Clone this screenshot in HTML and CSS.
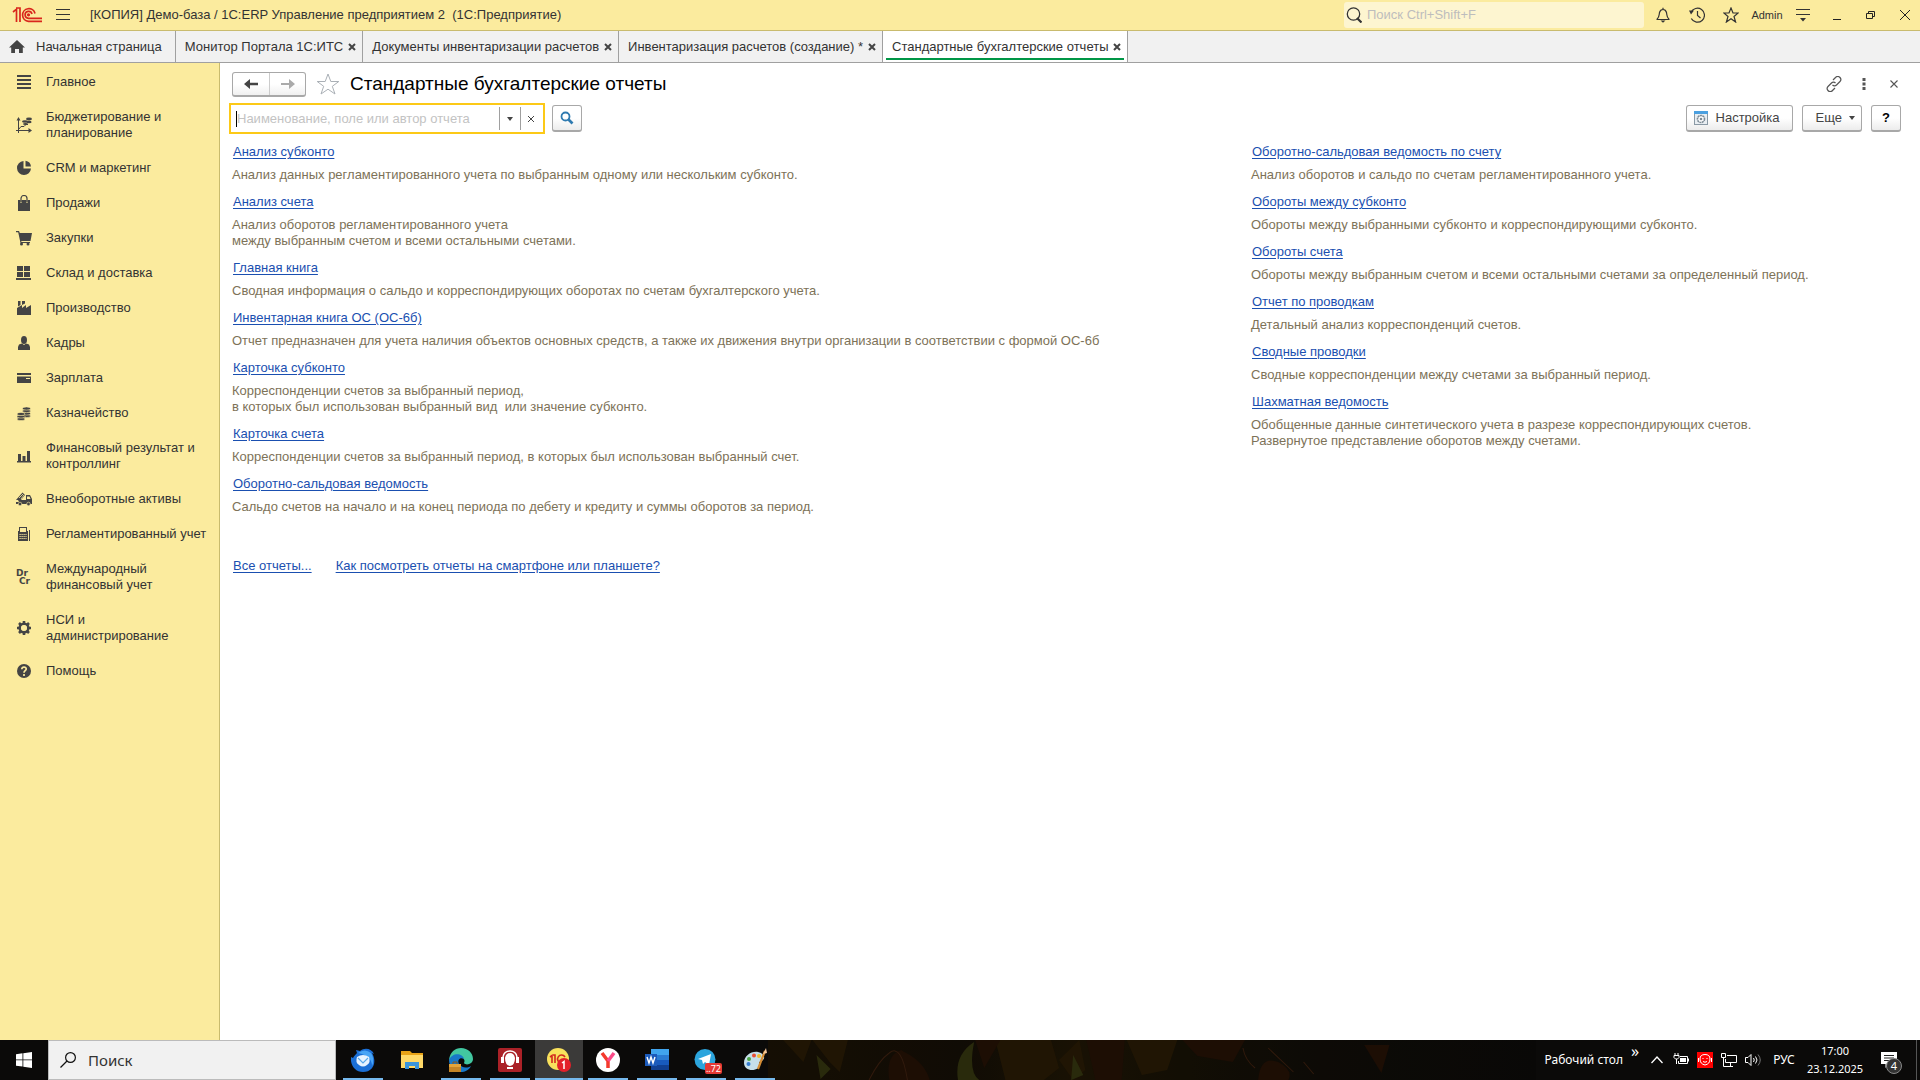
FILE: index.html
```
<!DOCTYPE html>
<html lang="ru">
<head>
<meta charset="utf-8">
<title>Стандартные бухгалтерские отчеты</title>
<link rel="stylesheet" href="styles.css">
</head>
<body>
<header class="titlebar">
  <svg class="logo" viewBox="0 0 30 16" width="30" height="16" fill="none" stroke="#d9261c" stroke-width="1.700"><path d="M1 5 4.500 2.200V15M8 15V1H4"/><path d="M23 6.500A6.300 6.300 0 1 0 16.500 14.300H30"/><path d="M20 7A3.500 3.500 0 1 0 16.500 11.300H30"/><circle cx="16.500" cy="7.800" r=".8"/></svg>
  <button class="icon-btn burger" aria-label="Меню"><svg viewBox="0 0 14 12" width="14" height="12" stroke="#333" fill="none"><path d="M0 .5h14M0 5.500h14M0 10.500h14"/></svg></button>
  <span class="app-title">[КОПИЯ] Демо-база / 1С:ERP Управление предприятием 2&nbsp; (1С:Предприятие)</span>
  <label class="global-search">
    <svg viewBox="0 0 16 16" width="16" height="16" fill="none" stroke="#333" stroke-width="1.300"><circle cx="7.500" cy="7" r="6.200"/><path d="m11 11 4.500 4.500" stroke-width="2.200"/></svg>
    <input type="text" placeholder="Поиск Ctrl+Shift+F" aria-label="Поиск">
  </label>
  <nav class="title-actions">
    <button class="icon-btn" aria-label="Уведомления"><svg viewBox="0 0 16 16" width="16" height="16" fill="none" stroke="#333" stroke-width="1.200"><path d="M1.500 12.500h13M2 12.300C4.500 10 4 8 4.500 5.500 5 3.500 6.500 2.500 8 2.500s3 1 3.500 3c.500 2.500 0 4.500 2.500 6.800M8 .8v2"/><path d="M5.500 13.500h5L8 15.800Z" fill="#333" stroke="none"/></svg></button>
    <button class="icon-btn" aria-label="История"><svg viewBox="0 0 16 16" width="16" height="16" fill="none" stroke="#333" stroke-width="1.200"><path d="M2 5.500A7 7 0 1 1 2.300 11.500M8.500 4v4.500l3 2.500"/><path d="M0 3.500h5L2 7.500Z" fill="#333" stroke="none"/></svg></button>
    <button class="icon-btn" aria-label="Избранное"><svg viewBox="0 0 16 16" width="16" height="16" fill="none" stroke="#333" stroke-width="1.200"><path d="m8 1 2 5h5.200L11 9.500l1.600 5.500L8 11.800 3.400 15 5 9.500.8 6H6Z"/></svg></button>
    <button class="user">Admin</button>
    <button class="icon-btn" aria-label="Сервис"><svg viewBox="0 0 16 14" width="16" height="14" fill="none" stroke="#333" stroke-width="1.200"><path d="M1 1.500h14M1 6.500h14"/><path d="M5 10h6l-3 3.500Z" fill="#333" stroke="none"/></svg></button>
    <button class="icon-btn" aria-label="Свернуть"><svg viewBox="0 0 10 12" width="10" height="12" stroke="#222"><path d="M1 10.500h8"/></svg></button>
    <button class="icon-btn" aria-label="Восстановить"><svg viewBox="0 0 10 10" width="10" height="10" fill="none" stroke="#222"><path d="M.5 3.500h6v5h-6ZM2.500 3V1.500h6v5H7"/></svg></button>
    <button class="icon-btn" aria-label="Закрыть"><svg viewBox="0 0 10 10" width="10" height="10" stroke="#222"><path d="m0 0 10 10M10 0 0 10"/></svg></button>
  </nav>
</header>

<nav class="tabs">
  <div class="tab tab-home"><button class="tab-label"><svg viewBox="0 0 16 14" width="16" height="14" fill="#444"><path d="M8 0 0 7.500h2.200V13H6V9h4v4h3.800V7.500H16Z"/></svg>Начальная страница</button></div>
  <div class="tab"><button class="tab-label">Монитор Портала 1С:ИТС</button><button class="tab-close" aria-label="Закрыть вкладку"><svg viewBox="0 0 8 8" width="8" height="8"><path d="m1 1 6 6M7 1 1 7"/></svg></button></div>
  <div class="tab"><button class="tab-label">Документы инвентаризации расчетов</button><button class="tab-close" aria-label="Закрыть вкладку"><svg viewBox="0 0 8 8" width="8" height="8"><path d="m1 1 6 6M7 1 1 7"/></svg></button></div>
  <div class="tab"><button class="tab-label">Инвентаризация расчетов (создание) *</button><button class="tab-close" aria-label="Закрыть вкладку"><svg viewBox="0 0 8 8" width="8" height="8"><path d="m1 1 6 6M7 1 1 7"/></svg></button></div>
  <div class="tab tab-active"><button class="tab-label">Стандартные бухгалтерские отчеты</button><button class="tab-close" aria-label="Закрыть вкладку"><svg viewBox="0 0 8 8" width="8" height="8"><path d="m1 1 6 6M7 1 1 7"/></svg></button></div>
</nav>

<div class="workspace">
  <nav class="sidebar">
    <a href="#"><svg viewBox="0 0 16 16"><path d="M1 1h14v2H1ZM1 5h14v2H1ZM1 9h14v2H1ZM1 13h14v2H1Z"/></svg>Главное</a>
    <a href="#"><svg viewBox="0 0 16 16"><path d="M2 3h1v10h10v1H3v2H2v-2H0v-1h2ZM.5 3.500 2.500 0l2 3.500ZM12.500 11l3.500 2.500-3.500 2.500Z"/><path d="m3 12 2-2.500h3l2-2h2" fill="none" stroke="#444"/><ellipse cx="13" cy="2" rx="3" ry="1.400"/><ellipse cx="9" cy="4.500" rx="3" ry="1.300"/><ellipse cx="13" cy="5" rx="2.600" ry="1.200"/><ellipse cx="9.500" cy="7" rx="2.500" ry="1"/></svg>Бюджетирование и планирование</a>
    <a href="#"><svg viewBox="0 0 16 16"><path d="M7.500 1v7.500H15A7 7 0 1 1 7.500 1ZM9.500 0.800a6.500 6.500 0 0 1 5.500 5.700H9.500Z"/></svg>CRM и маркетинг</a>
    <a href="#"><svg viewBox="0 0 16 16"><path d="M2 5h2.500v3h1V5h5v3h1V5H14v11H2Z"/><path d="M5 7V3.500a3 3 0 0 1 6 0V7" fill="none" stroke="#444" stroke-width="1.200"/></svg>Продажи</a>
    <a href="#"><svg viewBox="0 0 16 16"><path d="M0 1h3l.8 2H16l-1.500 8H5.200l.3 1H14v1H4.500L2.200 2.200H0Z"/><circle cx="5.500" cy="14" r="1.500"/><circle cx="12" cy="14" r="1.500"/></svg>Закупки</a>
    <a href="#"><svg viewBox="0 0 16 16"><path d="M1 1h6v5H1ZM8 1h6v5H8ZM1 7h6v5H1ZM8 7h6v5H8ZM0 13h15v2H0Z"/></svg>Склад и доставка</a>
    <a href="#"><svg viewBox="0 0 16 16"><path d="M1 15V8l5-3v3l4-3v3l5-3v10ZM2 1h2.500v4L2 6.500ZM6 1h3v2.500L6 5Z"/></svg>Производство</a>
    <a href="#"><svg viewBox="0 0 16 16"><ellipse cx="8" cy="5" rx="3" ry="4"/><path d="M2 15v-3l1-2.500 3-1 2 1.500 2-1.500 3 1 1 2.500v3Z"/></svg>Кадры</a>
    <a href="#"><svg viewBox="0 0 16 16"><path d="M1 3h14v2H1ZM1 6.500h14V13H1Z"/><path d="M10 8h4v1h-4Z" fill="#fbeb9e"/></svg>Зарплата</a>
    <a href="#"><svg viewBox="0 0 16 16"><g stroke="#fbeb9e" stroke-width=".6"><ellipse cx="10.500" cy="11" rx="4" ry="1.600"/><ellipse cx="10.500" cy="8.500" rx="4" ry="1.600"/><ellipse cx="10.500" cy="6" rx="4" ry="1.600"/><ellipse cx="10.500" cy="3.500" rx="4" ry="1.600"/><ellipse cx="5" cy="14" rx="4" ry="1.600"/><ellipse cx="5" cy="11.500" rx="4" ry="1.600"/><ellipse cx="5" cy="9" rx="4" ry="1.600"/></g></svg>Казначейство</a>
    <a href="#"><svg viewBox="0 0 16 16"><path d="M1 13h14v1.500H1ZM2 6h3v7H2ZM6.500 8h3v5h-3ZM11 3h3v10h-3Z"/></svg>Финансовый результат и контроллинг</a>
    <a href="#"><svg viewBox="0 0 16 16"><path d="M0 9 6.500 1.500 9 4 5 9h5V4h4l2 4v5H0v-2h3L2 9ZM11 5.500V8h3.500l-1-2.500Z" fill-rule="evenodd"/><circle cx="4" cy="13" r="1.800" stroke="#fbeb9e" stroke-width=".6"/><circle cx="12.500" cy="13" r="1.800" stroke="#fbeb9e" stroke-width=".6"/><path d="m3 7 4-4M5 8l3-4" stroke="#fbeb9e" stroke-width=".8"/></svg>Внеоборотные активы</a>
    <a href="#"><svg viewBox="0 0 16 16"><path d="M3 1h8v4h1v10H2V5h1Zm1 1v4h6V2ZM13 4h1v11h-1Z" fill-rule="evenodd"/><path d="M3.500 8.500h7M3.500 10.500h7M3.500 12.500h7" stroke="#fbeb9e" stroke-dasharray="1.200 .8"/></svg>Регламентированный учет</a>
    <a href="#"><svg viewBox="0 0 16 16"><text x="0" y="7" class="drcr">Dr</text><text x="3" y="15" class="drcr">Cr</text></svg>Международный финансовый учет</a>
    <a href="#"><svg viewBox="0 0 16 16"><circle cx="8" cy="8" r="4.300" fill="none" stroke="#444" stroke-width="2.600"/><path d="M8 1v3M8 12v3M1 8h3M12 8h3M3 3l2 2M11 11l2 2M13 3l-2 2M5 11l-2 2" stroke="#444" stroke-width="2.600"/><circle cx="8" cy="8" r="2.800" fill="#fbeb9e"/></svg>НСИ и администрирование</a>
    <a href="#"><svg viewBox="0 0 16 16"><circle cx="8" cy="8" r="7"/><path d="M5.800 6.200c.2-3 4.600-2.600 4.400 0C10 7.700 8 7.800 8 9.800M8 11v2" fill="none" stroke="#fbeb9e" stroke-width="1.700"/></svg>Помощь</a>
  </nav>

  <main class="content">
    <div class="form-head">
      <div class="history">
        <button aria-label="Назад"><svg viewBox="0 0 14 10" width="14" height="10" fill="#444"><path d="M0 5 6 0v3.800h8v2.400H6V10Z"/></svg></button>
        <button aria-label="Вперед"><svg viewBox="0 0 14 10" width="14" height="10" fill="#aaa"><path d="M14 5 8 0v4H0v2h8v4Z"/></svg></button>
      </div>
      <button class="icon-btn star" aria-label="В избранное"><svg viewBox="0 0 24 22" width="24" height="22" fill="#fff" stroke="#aab0b6"><path d="m12 1 2.800 7.500h8l-6.500 4.800 2.700 7.700-7-4.800-7 4.800 2.700-7.700L1.200 8.500h8Z"/></svg></button>
      <h1>Стандартные бухгалтерские отчеты</h1>
      <div class="form-tools">
        <button class="icon-btn" aria-label="Получить ссылку"><svg viewBox="0 0 16 16" width="16" height="16" fill="none" stroke="#555" stroke-width="1.200"><path d="m7 4 2.500-2.500a2.900 2.900 0 0 1 4.500 0c1 1.200 1 3 0 4L10.500 9a2.800 2.800 0 0 1-4 0M9 12l-2.500 2.500a2.900 2.900 0 0 1-4.500 0c-1-1.200-1-3 0-4L5.500 7a2.800 2.800 0 0 1 4 0"/></svg></button>
        <button class="icon-btn" aria-label="Еще действия"><svg viewBox="0 0 4 12" width="4" height="12" fill="#555"><path d="M.5 0h3v3h-3ZM.5 4.500h3v3h-3ZM.5 9h3v3h-3Z"/></svg></button>
        <button class="icon-btn" aria-label="Закрыть"><svg viewBox="0 0 8 8" width="8" height="8" stroke="#555" stroke-width="1.100"><path d="m.5.5 7 7m0-7-7 7"/></svg></button>
      </div>
    </div>

    <div class="command-bar">
      <div class="combo">
        <input type="text" placeholder="Наименование, поле или автор отчета" aria-label="Поиск отчета">
        <button aria-label="Выбрать"><svg viewBox="0 0 6 4" width="6" height="4" fill="#444"><path d="M0 0h6L3 4Z"/></svg></button>
        <button aria-label="Очистить"><svg viewBox="0 0 6 6" width="6" height="6" stroke="#444"><path d="m0 0 6 6M6 0 0 6"/></svg></button>
      </div>
      <button class="btn btn-square" aria-label="Найти"><svg viewBox="0 0 14 14" width="14" height="14" fill="none" stroke="#2e7ab0" stroke-width="1.800"><circle cx="5.500" cy="5.500" r="4"/><path d="m8.500 8.500 4 4" stroke-width="2.600"/></svg></button>
      <div class="commands">
        <button class="btn"><svg viewBox="0 0 14 14" width="14" height="14"><path d="M0 0h14v14H0Z" fill="#8a99a5"/><path d="M1 3h12v10H1Z" fill="#e9eef2"/><path d="M0 0h14v3H0Z" fill="#4ba0e0"/><circle cx="7" cy="8" r="3.500" fill="#fff" stroke="#7d8b96" stroke-width="1.600" stroke-dasharray="2 .5"/><circle cx="7" cy="8" r="1.300" fill="#7d8b96"/></svg>Настройка</button>
        <button class="btn btn-more">Еще<svg viewBox="0 0 6 4" width="6" height="4" fill="#444"><path d="M0 0h6L3 4Z"/></svg></button>
        <button class="btn btn-square btn-help">?</button>
      </div>
    </div>

    <div class="reports">
      <dl>
        <dt><a href="#">Анализ субконто</a></dt><dd>Анализ данных регламентированного учета по выбранным одному или нескольким субконто.</dd>
        <dt><a href="#">Анализ счета</a></dt><dd>Анализ оборотов регламентированного учета<br>между выбранным счетом и всеми остальными счетами.</dd>
        <dt><a href="#">Главная книга</a></dt><dd>Сводная информация о сальдо и корреспондирующих оборотах по счетам бухгалтерского учета.</dd>
        <dt><a href="#">Инвентарная книга ОС (ОС-6б)</a></dt><dd>Отчет предназначен для учета наличия объектов основных средств, а также их движения внутри организации в соответствии с формой ОС-6б</dd>
        <dt><a href="#">Карточка субконто</a></dt><dd>Корреспонденции счетов за выбранный период,<br>в которых был использован выбранный вид&nbsp; или значение субконто.</dd>
        <dt><a href="#">Карточка счета</a></dt><dd>Корреспонденции счетов за выбранный период, в которых был использован выбранный счет.</dd>
        <dt><a href="#">Оборотно-сальдовая ведомость</a></dt><dd>Сальдо счетов на начало и на конец периода по дебету и кредиту и суммы оборотов за период.</dd>
      </dl>
      <dl>
        <dt><a href="#">Оборотно-сальдовая ведомость по счету</a></dt><dd>Анализ оборотов и сальдо по счетам регламентированного учета.</dd>
        <dt><a href="#">Обороты между субконто</a></dt><dd>Обороты между выбранными субконто и корреспондирующими субконто.</dd>
        <dt><a href="#">Обороты счета</a></dt><dd>Обороты между выбранным счетом и всеми остальными счетами за определенный период.</dd>
        <dt><a href="#">Отчет по проводкам</a></dt><dd>Детальный анализ корреспонденций счетов.</dd>
        <dt><a href="#">Сводные проводки</a></dt><dd>Сводные корреспонденции между счетами за выбранный период.</dd>
        <dt><a href="#">Шахматная ведомость</a></dt><dd>Обобщенные данные синтетического учета в разрезе корреспондирующих счетов.<br>Развернутое представление оборотов между счетами.</dd>
      </dl>
    </div>
    <div class="more-links"><a href="#">Все отчеты...</a><a href="#">Как посмотреть отчеты на смартфоне или планшете?</a></div>
  </main>
</div>

<footer class="taskbar">
  <svg class="wallpaper" viewBox="0 0 760 40" preserveAspectRatio="none" aria-hidden="true">
    <defs><linearGradient id="dusk"><stop offset="0" stop-color="#1a1102"/><stop offset=".25" stop-color="#130d04"/><stop offset=".4" stop-color="#1f1502"/><stop offset=".55" stop-color="#151003"/><stop offset=".72" stop-color="#0e0b06"/><stop offset="1" stop-color="#090807"/></linearGradient></defs>
    <path fill="url(#dusk)" d="M0 0h760v40H0Z"/>
    <g fill="#2a1b02"><path d="M15 0h28l-8 22ZM44 0h35l-8 32-10-10ZM225 0h55l8 28-15 12h-38ZM355 0h50l-10 30-25 5ZM288 20l20-20 6 30-12 10Z"/></g>
    <g fill="#251003"><path d="M120 40q-4-25 12-30 14 8 10 30ZM135 12q20 10 25 28h-18ZM205 0h25l-16 28ZM315 0h38l-3 40h-26ZM410 0h62l-12 22-35-6ZM485 40q2-25 20-18 15 8 10 18ZM590 5h25l-8 28Z"/></g>
    <g fill="#36380e"><path d="M188 40q-4-25 16-38-6 30 5 38ZM48 15l14 14-10 10ZM302 15l10 20-12 5Z"/></g>
    <g fill="none" stroke="#41210e"><path d="M100 40q10-20 20-27 12-10 18 27M470 8q2 12 12 20M495 8l25 24M530 22l10 12"/></g>
  </svg>
  <button class="start" aria-label="Пуск"><svg viewBox="0 0 16 16" width="16" height="16" fill="#fff"><path d="M0 2.200 6.500 1.300V7.500H0ZM7.300 1.200 16 0v7.500H7.300ZM0 8.300h6.500v6.300L0 13.700ZM7.300 8.300H16V16l-8.700-1.200Z"/></svg></button>
  <label class="task-search"><svg viewBox="0 0 16 16" width="16" height="16" fill="none" stroke="#111" stroke-width="1.200"><circle cx="10.500" cy="5.500" r="4.900"/><path d="M7 9 .5 15.500"/></svg><input type="text" placeholder="Поиск" aria-label="Поиск в Windows"></label>
  <div class="apps">
    <button class="app running" aria-label="Thunderbird"><svg viewBox="0 0 24 24"><path d="M0 9l2 1C3 8 5 6 6 5L5 2l4 1c5-4 12-2 14 3l-2-1c5 8 2 19-9 19C4 24-1 17 0 9Z" fill="#1b6fd6"/><path d="M7 5q7-5 13 0 4 6 1 13Q21 8 7 5Z" fill="#48a4f5"/><path d="M6 9q6-4 12 0 2 5-2 8-4 3-8 0-4-3-2-8Z" fill="#e7f3ff"/><path d="m7 10 5 5 5-5" fill="none" stroke="#5aa8ea" stroke-width="1.200"/></svg></button>
    <button class="app" aria-label="Проводник"><svg viewBox="0 0 24 24"><path d="M1 3h9l2 2h11v15H1Z" fill="#e8a317"/><path d="M1 7h22v13H1Z" fill="#ffd968"/><path d="M5 21v-7h14v7h-4v-3H9v3Z" fill="#3a95dc"/></svg></button>
    <button class="app running" aria-label="Edge"><svg viewBox="0 0 24 24"><path d="M0 12C1 4 6 0 12 0c7 0 12 5 12 11 0 5-7 7-9 4 3-5-7-10-15-3Z" fill="#42c7a0"/><path d="M0 12C3 4 14 5 15 11c-4-2-7 1-5 5 2 3 7 5 12 2-2 4-6 6-10 6C5 24 0 19 0 12Z" fill="#1878c8"/><path d="M0 16h12v8H0Z" fill="#c58425"/><path d="M0 16h12v3H0Z" fill="#e3a43a"/><path d="M4 16v-2h4v2" fill="none" stroke="#8d5612"/></svg></button>
    <button class="app running" aria-label="Поддержка"><svg viewBox="0 0 24 24"><rect width="24" height="24" rx="2" fill="#ab2127"/><path d="M5 12V9q1-6 7-6t7 6v3" fill="none" stroke="#fff" stroke-width="1.500"/><path d="M7 10q1-5 5-5t5 5q0 7-5 8-5-1-5-8ZM3 9h3v6H3ZM18 9h3v6h-3ZM9 19h6v2H9Z" fill="#fff"/></svg></button>
    <button class="app running current" aria-label="1С:Предприятие"><svg viewBox="0 0 24 24"><circle cx="11" cy="11" r="11" fill="#f9e15c"/><path d="m3 9 2-1.500V15M8 15V7H6M18 9a4 4 0 1 0-4 6h6" fill="none" stroke="#d3281f" stroke-width="1.600"/><circle cx="17" cy="17" r="7" fill="#e3202a"/><path d="m15 15 2-1.500V21" fill="none" stroke="#fff" stroke-width="1.500"/></svg></button>
    <button class="app running" aria-label="Яндекс Браузер"><svg viewBox="0 0 24 24"><circle cx="12" cy="12" r="12" fill="#fff"/><path d="m6 5 6 8v7" fill="none" stroke="#f4392c" stroke-width="3.500"/><path d="m12 13 6-8" stroke="#fb4a89" stroke-width="3.500"/></svg></button>
    <button class="app running" aria-label="Word"><svg viewBox="0 0 24 24"><path d="M6 1h18v6H6Z" fill="#41a5ee"/><path d="M6 7h18v5H6Z" fill="#2b7cd3"/><path d="M6 12h18v5H6Z" fill="#185abd"/><path d="M6 17h18v5H6Z" fill="#103f91"/><path d="M0 6h12v12H0Z" fill="#1c5bbb"/><path d="m2 9 2 6 2-6 2 6 2-6" fill="none" stroke="#fff" stroke-width="1.400"/></svg></button>
    <button class="app running" aria-label="Telegram"><svg viewBox="0 0 24 24"><circle cx="11" cy="11.500" r="10.500" fill="#2ca5dd"/><path d="m4 11 13-5-2 11-4-3-2 2-1-4Z" fill="#fff"/></svg><span class="count">..72</span></button>
    <button class="app running" aria-label="Paint"><svg viewBox="0 0 24 24"><path d="M1 15C1 8 8 3 15 4c7 1 8 8 3 9-4 1 0 5-3 7-5 4-14 2-14-5Z" fill="#c6dfea"/><circle cx="6" cy="11" r="2" fill="#4aa546"/><circle cx="11" cy="7.500" r="2" fill="#e94e35"/><circle cx="5.500" cy="16" r="2" fill="#357dd2"/><circle cx="16" cy="8" r="2" fill="#f1bd32"/><path d="m22 3-7 18" stroke="#d58d35" stroke-width="2.200"/><path d="m20 6 3-6 1 5Z" fill="#f3c69b"/></svg></button>
  </div>
  <div class="tray">
    <span class="desk">Рабочий стол</span><span class="chev">»</span>
    <button class="tray-btn" aria-label="Скрытые значки"><svg viewBox="0 0 12 8" width="12" height="8" fill="none" stroke="#fff" stroke-width="1.300"><path d="m.5 7 5.500-6 5.500 6"/></svg></button>
    <button class="tray-btn" aria-label="Питание"><svg viewBox="0 0 16 14" width="16" height="14" fill="none" stroke="#fff"><path d="M7 3.500h7.500v7H5.500V8M15.500 5.500v3M1 2.500h5v2L4.500 6h-2L1 4.500ZM2 0v2.500M5 0v2.500M3.500 6v5"/><path d="M7 5h6v4H7Z" fill="#fff" stroke="none"/></svg></button>
    <button class="tray-btn" aria-label="Поддержка"><svg viewBox="0 0 16 16" width="16" height="16" fill="none" stroke="#fff"><path d="M0 0h16v16H0Z" fill="#f00" stroke="none"/><path d="M3 7q0-4.500 5-4.500T13 7q0 5-5 6-5-1-5-6ZM1.500 6v4M14.500 6v4M6 6v1M10 6v1M6 9.500q2 1.500 4 0"/></svg></button>
    <button class="tray-btn" aria-label="Сеть"><svg viewBox="0 0 16 14" width="16" height="14" fill="none" stroke="#fff"><path d="M6 2.500h9.500v7h-11V6M.5.5h4v4h-4ZM2.500 5v8.500H12M9.500 10v3.500"/></svg></button>
    <button class="tray-btn" aria-label="Громкость"><svg viewBox="0 0 16 14" width="16" height="14" fill="none" stroke="#fff"><path d="M.5 4.500h2.500L6 1.500v11L3 9.500H.5ZM8.500 5q1.500 2 0 4M10.500 3.500q3 3.500 0 7"/><path d="M13 1.500q4.500 5.500 0 11" stroke="#777"/></svg></button>
    <button class="lang">РУС</button>
    <button class="clock"><span>17:00</span><span>23.12.2025</span></button>
    <button class="notice" aria-label="Уведомления"><svg viewBox="0 0 16 16" width="16" height="16"><path d="M0 0h16v12H8l-3.500 4v-4H0Z" fill="#fff"/><path d="M3 3.500h10M3 6h10M3 8.500h7" stroke="#222"/></svg><span class="badge">4</span></button>
  </div>
</footer>
</body>
</html>
```
FILE: styles.css
```
* { box-sizing: border-box; }
html { font-family: "Liberation Sans", Arial, sans-serif; font-size: 13px; line-height: 16px; color: #333; }
body { margin: 0; min-height: 100vh; display: flex; flex-direction: column; background: #fff; }
button, input { font: inherit; color: inherit; margin: 0; padding: 0; border: 0; background: none; }
input { outline: none; min-width: 0; }
svg { display: block; flex: none; }
.icon-btn { display: flex; align-items: center; justify-content: center; }

/* Title bar */
.titlebar { height: 31px; display: flex; align-items: center; background: #fbeb9e; border-bottom: 1px solid #c9bb6e; }
.logo { margin-left: 12px; }
.burger { margin-left: 14px; }
.app-title { margin-left: 20px; }
.global-search { margin-left: auto; width: 300px; height: 26px; display: flex; align-items: center; gap: 5px; padding-left: 2px; border-radius: 3px; background: #fdf5d0; }
.global-search input { flex: 1; }
.global-search input::placeholder { color: #bdbdbd; opacity: 1; }
.title-actions { display: flex; align-items: center; margin-right: -2px; }
.title-actions .icon-btn { width: 34px; height: 30px; }
.title-actions .icon-btn:first-child { margin-left: 2px; }
.user { width: 38px; font-size: 11px; }

/* Open windows */
.tabs { height: 32px; display: flex; background: #f1f1f1; border-bottom: 1px solid #a0a0a0; }
.tab { display: flex; align-items: center; gap: 5px; padding: 0 6px 0 9px; border-right: 1px solid #a0a0a0; position: relative; }
.tab-home { padding-right: 13px; }
.tab-label { display: flex; align-items: center; gap: 11px; white-space: nowrap; }
.tab-close svg { stroke: #444; stroke-width: 2; }
.tab-active { background: #fff; }
.tab-active::after { content: ""; position: absolute; left: 3px; right: 3px; bottom: 2px; height: 2px; background: #009646; }

.workspace { flex: 1; display: flex; }

/* Sections */
.sidebar { width: 220px; flex: none; padding-top: 1px; background: #fbeb9e; border-right: 1px solid #c9bb6e; }
.sidebar a { display: flex; align-items: center; gap: 14px; padding: 10px 8px 9px 16px; color: #333; text-decoration: none; }
.sidebar svg { width: 16px; height: 16px; fill: #444; }
.drcr { font: bold 9px "DejaVu Sans", sans-serif; }

/* Form */
.content { flex: 1; min-width: 0; padding: 8px 19px 0 12px; }
.form-head { display: flex; align-items: center; height: 26px; }
.history { display: flex; height: 25px; border: 1px solid #a8a8a8; border-bottom-width: 2px; border-radius: 3px; background: linear-gradient(#fff 50%, #f0f0f0); }
.history button { width: 36px; display: flex; align-items: center; justify-content: center; }
.history button + button { border-left: 1px solid #ccc; }
.star { margin-left: 10px; }
h1 { margin: 0 0 0 10px; font-size: 19px; line-height: 24px; font-weight: normal; color: #000; }
.form-tools { margin-left: auto; margin-right: -8px; display: flex; }
.form-tools .icon-btn { width: 30px; height: 26px; }

.command-bar { display: flex; align-items: center; margin: 6px 0 10px -3px; height: 31px; }
.combo { display: flex; align-items: center; width: 316px; height: 31px; padding: 3px 2px 3px 5px; border: 2px solid #fcc917; background: #fff; }
.combo::before { content: ""; width: 1px; height: 16px; background: #000; }
.combo input { flex: 1; }
.combo input::placeholder { color: #c3c3c3; opacity: 1; }
.combo button { width: 21px; height: 23px; display: flex; align-items: center; justify-content: center; border-left: 1px solid #a0a0a0; }
.btn { height: 27px; display: flex; align-items: center; justify-content: center; gap: 8px; padding: 0 12px 0 7px; border: 1px solid #a8a8a8; border-bottom-width: 2px; border-radius: 3px; background: linear-gradient(#fff 50%, #ececec); color: #444; }
.btn-square { width: 30px; padding: 0; }
.combo + .btn { margin-left: 7px; }
.commands { margin-left: auto; display: flex; gap: 9px; }
.btn-more { padding: 0 6px 0 13px; gap: 7px; }
.btn-help { font-weight: bold; color: #000; }

.reports { display: grid; grid-template-columns: 1019fr 650fr; }
dl { margin: 0; }
dt { margin-bottom: 7px; padding-left: 1px; }
dd { margin: 0 0 11px; color: #7d7258; }
.content a { color: #1a4fb0; text-underline-offset: 2px; }
.more-links { display: flex; gap: 24px; margin-top: 32px; padding-left: 1px; }

/* Desktop taskbar */
.taskbar { position: relative; height: 40px; display: flex; align-items: stretch; background: #0b0a09; color: #fff; font-family: "Noto Sans", sans-serif; font-size: 12px; }
.taskbar > * { position: relative; }
.taskbar .wallpaper { position: absolute; left: 40%; width: 40%; height: 40px; opacity: .7; }
.start { width: 48px; display: flex; align-items: center; justify-content: center; }
.task-search { width: 288px; display: flex; align-items: center; gap: 12px; padding: 0 11px; background: #f1f1f1; border: 1px solid #bbb; }
.task-search input { flex: 1; font-size: 15px; }
.task-search input::placeholder { color: #333; opacity: 1; }
.apps { display: flex; gap: 1px; padding-left: 3px; }
.app { position: relative; width: 48px; display: flex; align-items: center; justify-content: center; }
.app svg { width: 24px; height: 24px; }
.app.running::after { content: ""; position: absolute; left: 4px; right: 4px; bottom: 0; height: 2px; background: #76b9ed; }
.app.current { background: #3b3a39; }
.app.current::after { left: 0; right: 0; }
.count { position: absolute; right: 8px; bottom: 6px; padding: 0 1px; border-radius: 2px; background: #e53935; font-size: 9px; line-height: 11px; }
.tray { margin-left: auto; margin-right: 3px; padding-right: 11px; border-right: 1px solid #555; display: flex; align-items: center; }
.desk { padding-right: 2px; }
.chev { width: 20px; height: 34px; font-size: 16px; text-align: center; }
.tray-btn { width: 24px; display: flex; justify-content: center; }
.lang { width: 38px; }
.clock { width: 64px; display: flex; flex-direction: column; gap: 2px; text-align: center; font-size: 11px; }
.notice { position: relative; width: 32px; margin-left: 6px; display: flex; justify-content: center; }
.badge { position: absolute; left: 13px; top: 6px; width: 16px; height: 16px; border-radius: 50%; border: 1px solid #888; background: #333; font-size: 11px; line-height: 14px; text-align: center; }
```
